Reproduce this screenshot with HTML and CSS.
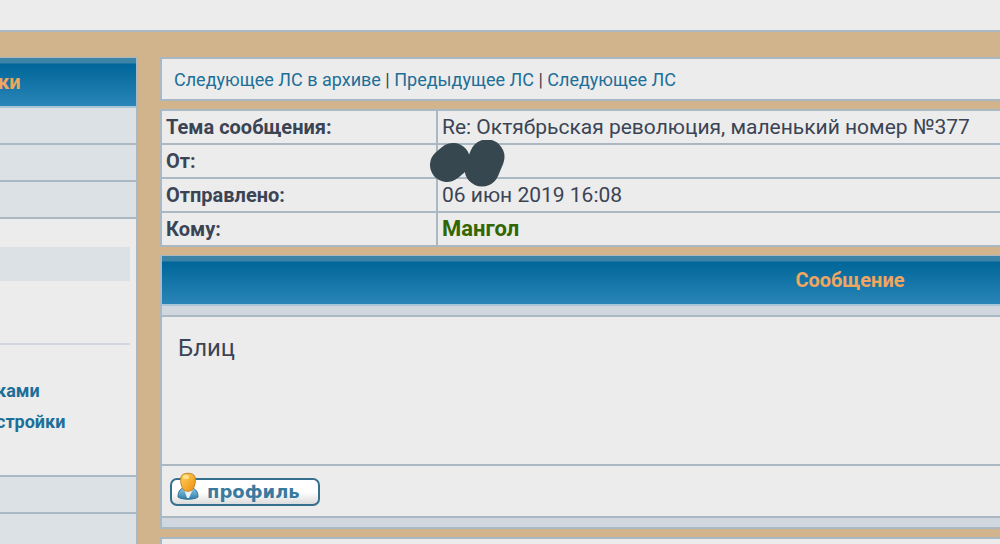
FILE: index.html
```html
<!DOCTYPE html>
<html lang="ru">
<head>
    <meta charset="UTF-8">
    <meta name="viewport" content="width=device-width, initial-scale=1.0">
    <title>Личные сообщения</title>
    <link rel="stylesheet" href="styles.css">
</head>
<body>
    <header class="top-bar"></header>
    <div class="page">
        <aside class="sidebar">
            <h2 class="cat side-title">ки</h2>
            <div class="side-row"></div>
            <div class="side-row"></div>
            <div class="side-row"></div>
            <div class="side-panel">
                <div class="side-sub"></div>
                <hr>
                <ul class="side-links">
                    <li><a href="#">ками</a></li>
                    <li><a href="#">стройки</a></li>
                </ul>
            </div>
            <div class="side-row"></div>
            <div class="side-row"></div>
        </aside>
        <main class="content">
            <nav class="box pm-nav">
                <a href="#">Следующее ЛС в архиве</a> | <a href="#">Предыдущее ЛС</a> | <a href="#">Следующее ЛС</a>
            </nav>
            <div class="info-wrap">
                <table class="info">
                    <tr><th scope="row">Тема сообщения:</th><td>Re: Октябрьская революция, маленький номер №377</td></tr>
                    <tr><th scope="row">От:</th><td></td></tr>
                    <tr><th scope="row">Отправлено:</th><td>06 июн 2019 16:08</td></tr>
                    <tr><th scope="row">Кому:</th><td><b class="user">Мангол</b></td></tr>
                </table>
                <svg class="scribble" width="76" height="48" viewBox="0 0 76 48" aria-hidden="true">
                    <g stroke="#37474f" stroke-linecap="round" fill="none">
                        <path d="M17 25L23 20" stroke-width="34"/>
                        <path d="M57 17L52 29" stroke-width="35"/>
                        <path d="M34 23l6 2" stroke-width="16"/>
                    </g>
                </svg>
            </div>
            <section class="message">
                <h2 class="cat">Сообщение</h2>
                <div class="spacer"></div>
                <div class="post-body">Блиц</div>
                <div class="post-foot">
                    <button type="button" class="profile-btn">
                        <svg class="profile-icon" width="22" height="29" viewBox="0 0 22 29" aria-hidden="true">
                            <defs>
                                <linearGradient id="head" x2="1" y2="1">
                                    <stop offset="0" stop-color="#ffd45c"/>
                                    <stop offset="1" stop-color="#ee8d10"/>
                                </linearGradient>
                                <linearGradient id="coat" x2="0" y2="1">
                                    <stop offset="0" stop-color="#8fc6e2"/>
                                    <stop offset="1" stop-color="#2d7fab"/>
                                </linearGradient>
                            </defs>
                            <path d="M1 25c0-5 2-8 5-9h9c4 1 6 4 6 9-4 3-16 3-20 0z" fill="url(#coat)" stroke="#35708f"/>
                            <path d="M7 17h9l-4 9h-2z" fill="#e8f2f7"/>
                            <path d="M4 5c1-5 13-5 14 0 1 4 0 9-2 12-2 3-8 3-10 0-2-3-3-8-2-12z" fill="url(#head)" stroke="#c98325"/>
                            <ellipse cx="9" cy="5" rx="3" ry="2" fill="#ffe48c"/>
                        </svg>
                        профиль
                    </button>
                </div>
                <div class="spacer"></div>
            </section>
            <div class="box"></div>
        </main>
    </div>
</body>
</html>
```

FILE: styles.css
```css
* { box-sizing: border-box; }
body { margin: 0; min-height: 100vh; overflow: hidden; background-color: #d1b48c; color: #3b4454; font-family: Roboto, "Liberation Sans", sans-serif; font-size: 18px; line-height: 22px; }
a { color: #1d6f98; text-decoration: none; }
h2 { margin: 0; }

.top-bar { height: 32px; background-color: #ececec; border-bottom: 2px solid #a9b8c2; }
.page { display: flex; gap: 22px; padding-top: 25px; }

/* blue gradient caption */
.cat { height: 51px; padding-top: 13px; border-top: 1px solid #a9b8c2; border-bottom: 2px solid #a9c6d8; background: linear-gradient(#3c83a8 5px, #006699 6px, #2a85b8); color: #eea660; font-size: 20px; line-height: 22px; text-align: center; font-weight: bold; }

.sidebar { flex: none; width: 138px; border-right: 2px solid #a9b8c2; background-color: #ececec; overflow: hidden; }
.side-title { text-align: left; text-indent: -2px; }
.side-row { height: 37px; background-color: #dce1e5; border-bottom: 2px solid #a9b8c2; }
.side-panel { height: 258px; padding: 28px 6px 0 0; border-bottom: 2px solid #a9b8c2; }
.side-sub { height: 34px; background-color: #dce1e5; }
.side-panel hr { margin: 62px 0 35px; border: 0; border-top: 2px solid #d1d7dc; }
.side-links { margin: 0 0 0 -4px; padding: 0; list-style: none; font-weight: bold; }
.side-links li { height: 31px; }

.content { flex: none; width: 138%; display: flex; flex-direction: column; gap: 8px; }
.box { min-height: 44px; background-color: #ececec; border: 2px solid #a9b8c2; }
.pm-nav { padding: 10px 12px 8px; }

.info-wrap { position: relative; }
.info { width: 100%; border-collapse: collapse; table-layout: fixed; background-color: #ececec; font-size: 21px; }
.info th, .info td { height: 34px; padding: 0 4px; border: 2px solid #a9b8c2; text-align: left; line-height: 30px; }
.info th { width: 276px; font-size: 20px; }
.user { color: #336600; font-size: 22px; }
.scribble { position: absolute; left: 270px; top: 31px; }

.message { background-color: #ececec; border: solid #a9b8c2; border-width: 0 2px 2px; }
.spacer { height: 9px; background-color: #d1d7df; }
.post-body { min-height: 151px; padding: 17px 16px; border: solid #a9b8c2; border-width: 2px 0; font-size: 24px; line-height: 28px; }
.post-foot { padding: 12px 8px 10px; border-bottom: 2px solid #a9b8c2; }
.profile-btn { position: relative; display: block; height: 28px; padding: 0 18px 0 35px; border: 2px solid #35708f; border-radius: 7px; background: linear-gradient(#fff 50%, #dcdcdc); color: #3a7a9e; font: bold 18px/22px "DejaVu Sans", sans-serif; }
.profile-icon { position: absolute; left: 5px; top: -8px; }
```
